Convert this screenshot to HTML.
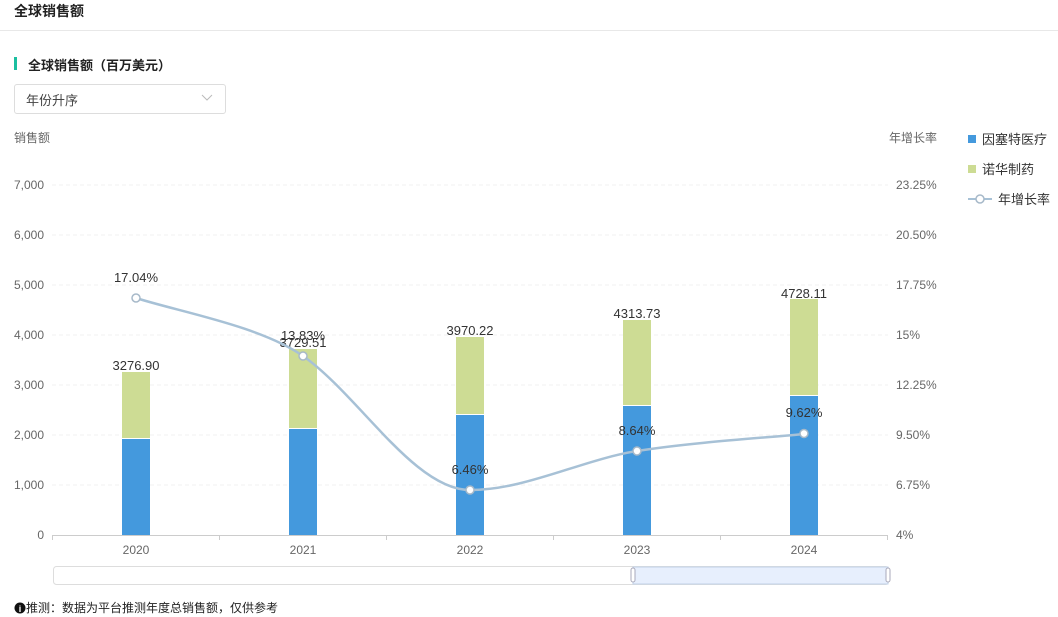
<!DOCTYPE html>
<html><head><meta charset="utf-8"><style>
body{margin:0;width:1058px;height:617px;background:#fff;font-family:"Liberation Sans","Noto Sans CJK SC",sans-serif;position:relative;overflow:hidden;color:#333}
.abs{position:absolute}
</style></head><body>
<div class="abs" style="left:14px;top:1px;font-size:14px;font-weight:bold;color:#222">全球销售额</div>
<div class="abs" style="left:0;top:30px;width:1058px;height:1px;background:#e8e8e8"></div>
<div class="abs" style="left:14px;top:57px;width:3px;height:13px;background:#1bbfa0"></div>
<div class="abs" style="left:28px;top:55px;font-size:13px;font-weight:bold;color:#222">全球销售额（百万美元）</div>
<div class="abs" style="left:14px;top:84px;width:210px;height:28px;border:1px solid #ddd;border-radius:3px"></div>
<div class="abs" style="left:26px;top:90px;font-size:13px;color:#444">年份升序</div>
<svg class="abs" style="left:200px;top:93px" width="14" height="10"><path d="M2 2 L7 7 L12 2" fill="none" stroke="#bbb" stroke-width="1"/></svg>
<svg class="abs" style="left:0;top:0" width="1058" height="617" font-family="Liberation Sans,Noto Sans CJK SC,sans-serif">
<text x="14" y="142" font-size="12" fill="#666">销售额</text>
<text x="937" y="142" font-size="12" fill="#666" text-anchor="end">年增长率</text>
<g stroke="#f0f0f0" stroke-dasharray="4,3">
<line x1="52" y1="185" x2="888" y2="185"/><line x1="52" y1="235" x2="888" y2="235"/><line x1="52" y1="285" x2="888" y2="285"/><line x1="52" y1="335" x2="888" y2="335"/><line x1="52" y1="385" x2="888" y2="385"/><line x1="52" y1="435" x2="888" y2="435"/><line x1="52" y1="485" x2="888" y2="485"/>
</g>
<g font-size="12" fill="#666" text-anchor="end">
<text x="44" y="189">7,000</text><text x="44" y="239">6,000</text><text x="44" y="289">5,000</text><text x="44" y="339">4,000</text><text x="44" y="389">3,000</text><text x="44" y="439">2,000</text><text x="44" y="489">1,000</text><text x="44" y="539">0</text>
</g>
<g font-size="12" fill="#666">
<text x="896" y="189">23.25%</text><text x="896" y="239">20.50%</text><text x="896" y="289">17.75%</text><text x="896" y="339">15%</text><text x="896" y="389">12.25%</text><text x="896" y="439">9.50%</text><text x="896" y="489">6.75%</text><text x="896" y="539">4%</text>
</g>
<line x1="52" y1="535.5" x2="888" y2="535.5" stroke="#ccc"/>
<g stroke="#ccc"><line x1="52.5" y1="535" x2="52.5" y2="540"/><line x1="219.5" y1="535" x2="219.5" y2="540"/><line x1="386.5" y1="535" x2="386.5" y2="540"/><line x1="553.5" y1="535" x2="553.5" y2="540"/><line x1="720.5" y1="535" x2="720.5" y2="540"/><line x1="887.5" y1="535" x2="887.5" y2="540"/></g>
<g font-size="12" fill="#666" text-anchor="middle">
<text x="136" y="554">2020</text><text x="303" y="554">2021</text><text x="470" y="554">2022</text><text x="637" y="554">2023</text><text x="804" y="554">2024</text>
</g>
<g>
<rect x="122" y="372" width="28" height="66" fill="#cddc94"/><rect x="122" y="439" width="28" height="96" fill="#4499dd"/>
<rect x="289" y="349" width="28" height="79" fill="#cddc94"/><rect x="289" y="429" width="28" height="106" fill="#4499dd"/>
<rect x="456" y="337" width="28" height="77" fill="#cddc94"/><rect x="456" y="415" width="28" height="120" fill="#4499dd"/>
<rect x="623" y="320" width="28" height="85" fill="#cddc94"/><rect x="623" y="406" width="28" height="129" fill="#4499dd"/>
<rect x="790" y="299" width="28" height="96" fill="#cddc94"/><rect x="790" y="396" width="28" height="139" fill="#4499dd"/>
</g>
<g font-size="13" fill="#333" text-anchor="middle">
<text x="136" y="370">3276.90</text><text x="303" y="347">3729.51</text><text x="470" y="335">3970.22</text><text x="637" y="318">4313.73</text><text x="804" y="298">4728.11</text>
</g>
<path d="M136 298 C180 312 260 326 303 356 C358.7 395 414.3 490 470 490 C525.7 490 581.3 460 637 451 C692.7 442 776.2 437 804 434" fill="none" stroke="#a7c1d6" stroke-width="2.5"/>
<g fill="#fff" stroke="#a7b9c9" stroke-width="1.5">
<circle cx="136" cy="298" r="4"/><circle cx="303" cy="356" r="4"/><circle cx="470" cy="490" r="4"/><circle cx="637" cy="451" r="4"/><circle cx="804" cy="433.5" r="4"/>
</g>
<g font-size="13" fill="#333" text-anchor="middle">
<text x="136" y="282">17.04%</text><text x="303" y="340">13.83%</text><text x="470" y="474">6.46%</text><text x="637" y="435">8.64%</text><text x="804" y="417">9.62%</text>
</g>
<rect x="968" y="135" width="8" height="8" fill="#4499dd"/>
<text x="982" y="144" font-size="13" fill="#333">因塞特医疗</text>
<rect x="968" y="165" width="8" height="8" fill="#cddc94"/>
<text x="982" y="174" font-size="13" fill="#333">诺华制药</text>
<line x1="968" y1="199" x2="992" y2="199" stroke="#a7c1d6" stroke-width="2"/>
<circle cx="980" cy="199" r="4" fill="#fff" stroke="#a7b9c9" stroke-width="1.5"/>
<text x="998" y="204" font-size="13" fill="#333">年增长率</text>
<rect x="53.5" y="566.5" width="835" height="18" rx="3" fill="#fff" stroke="#ddd"/>
<rect x="633" y="567" width="255" height="17" fill="#e7effd" stroke="#c2d2e8"/>
<rect x="631" y="568" width="4" height="14" rx="2" fill="#fff" stroke="#aab"/>
<rect x="886" y="568" width="4" height="14" rx="2" fill="#fff" stroke="#aab"/>
<circle cx="20" cy="608" r="5.5" fill="#111"/>
<text x="20" y="612" font-size="9" fill="#fff" text-anchor="middle" font-weight="bold">i</text>
<text x="26" y="612" font-size="12" fill="#222">推测：数据为平台推测年度总销售额，仅供参考</text>
</svg>
</body></html>
